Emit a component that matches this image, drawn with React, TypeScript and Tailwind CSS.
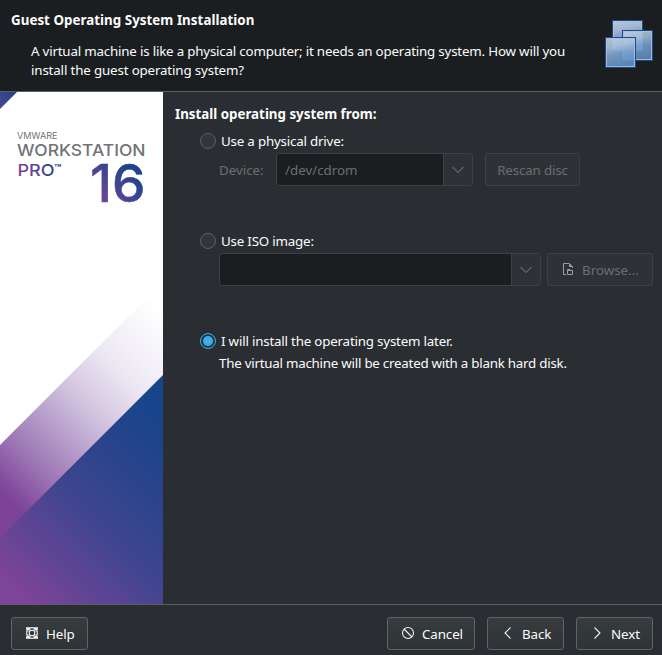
import type { ReactNode } from "react";

function StackIcon() {
  const squares = [
    { x: 7, y: 0, o: 0.95 },
    { x: 17, y: 10, o: 0.88 },
    { x: 0, y: 17, o: 0.92 },
  ];
  return (
    <svg width="48" height="48" viewBox="0 0 48 48" className="mt-5 shrink-0">
      <defs>
        <linearGradient id="glass" x1="0" y1="0" x2="0.25" y2="1">
          <stop offset="0" stopColor="#c3d0e2" />
          <stop offset="0.35" stopColor="#a9c0db" />
          <stop offset="0.6" stopColor="#7ba3cd" />
          <stop offset="1" stopColor="#5f8fc3" />
        </linearGradient>
      </defs>
      {squares.map((s) => (
        <g key={s.x}>
          <rect x={s.x + 0.5} y={s.y + 0.5} width="30" height="30" fill="url(#glass)" fillOpacity={s.o} stroke="#1f4a8a" />
          <rect x={s.x + 1.5} y={s.y + 1.5} width="28" height="28" fill="none" stroke="#a9c2e0" strokeOpacity="0.85" />
        </g>
      ))}
    </svg>
  );
}

function Banner() {
  return (
    <svg width="163" height="512" viewBox="0 0 163 512" className="shrink-0 bg-white">
      <defs>
        <linearGradient id="band" gradientUnits="userSpaceOnUse" x1="0" y1="396" x2="170" y2="226">
          <stop offset="0" stopColor="#7d4399" />
          <stop offset="0.18" stopColor="#9e78b5" />
          <stop offset="0.38" stopColor="#bea9d0" />
          <stop offset="0.52" stopColor="#d6c8e1" />
          <stop offset="0.7" stopColor="#ece8f3" />
          <stop offset="1" stopColor="#ffffff" />
        </linearGradient>
        <linearGradient id="base" gradientUnits="userSpaceOnUse" x1="0" y1="483" x2="162" y2="321">
          <stop offset="0" stopColor="#7e4499" />
          <stop offset="0.45" stopColor="#41458f" />
          <stop offset="0.75" stopColor="#27448c" />
          <stop offset="1" stopColor="#16458b" />
        </linearGradient>
        <linearGradient id="corner" gradientUnits="userSpaceOnUse" x1="0" y1="8" x2="14" y2="0">
          <stop offset="0" stopColor="#41458f" />
          <stop offset="1" stopColor="#1f458c" />
        </linearGradient>
        <linearGradient id="pro" gradientUnits="userSpaceOnUse" x1="18" y1="84" x2="60" y2="74">
          <stop offset="0" stopColor="#7e4499" />
          <stop offset="1" stopColor="#1c458b" />
        </linearGradient>
        <linearGradient id="num" gradientUnits="userSpaceOnUse" x1="98" y1="110" x2="128" y2="76">
          <stop offset="0" stopColor="#75459a" />
          <stop offset="1" stopColor="#1c458b" />
        </linearGradient>
      </defs>
      <path d="M0 0H17L0 17Z" fill="url(#corner)" />
      <path d="M0 353L163 190V284L0 447Z" fill="url(#band)" />
      <path d="M0 446L163 283V512H0Z" fill="url(#base)" />
      <g fontFamily="Inter, 'Liberation Sans', sans-serif" fill="#727376">
        <text x="17" y="47" fontSize="9" textLength="40.5" lengthAdjust="spacingAndGlyphs">VMWARE</text>
        <text x="17" y="64" fontSize="16" fontWeight="500" textLength="128.5" lengthAdjust="spacingAndGlyphs">WORKSTATION</text>
        <text x="17.5" y="84" fontSize="16.5" fontWeight="500" fill="url(#pro)" textLength="37" lengthAdjust="spacingAndGlyphs">PRO</text>
        <text x="54" y="79" fontSize="9" fontWeight="700" fill="#27448c" textLength="7.5" lengthAdjust="spacingAndGlyphs">™</text>
        <text x="90" y="110" fontSize="52.5" fontWeight="500" fill="url(#num)" stroke="url(#num)" strokeWidth="0.5" textLength="55.5" lengthAdjust="spacingAndGlyphs">16</text>
      </g>
    </svg>
  );
}

function Radio({ checked = false }: { checked?: boolean }) {
  return (
    <span
      className={
        checked
          ? "flex size-4 shrink-0 items-center justify-center rounded-full border border-[#3daee9] bg-[#223843]"
          : "flex size-4 shrink-0 rounded-full border border-[#5c6164] bg-[#31363b]"
      }
    >
      {checked && <span className="size-2.5 rounded-full bg-[#3daee9]" />}
    </span>
  );
}

function Option({ label, checked }: { label: string; checked?: boolean }) {
  return (
    <div className="flex h-6 items-center gap-[5px] pl-[37px]">
      <Radio checked={checked} />
      <span className="tracking-[-0.19px]">{label}</span>
    </div>
  );
}

function Combo({ value, className }: { value: string; className: string }) {
  return (
    <div className={`flex h-[33px] overflow-hidden rounded-[3px] border border-[#3d4144] bg-[#1b1e20] text-[#6b6e70] ${className}`}>
      <span className="flex flex-1 items-center pl-2 pt-px">{value}</span>
      <span className="flex w-[29px] items-center justify-center border-l border-[#3d4144] bg-[#2e3236]">
        <svg width="14" height="8" viewBox="0 0 14 8" fill="none" stroke="#5f6366" strokeWidth="1.2">
          <path d="M1.5 1L7 6.5L12.5 1" />
        </svg>
      </span>
    </div>
  );
}

function Button({ icon, label, className }: { icon: ReactNode; label: string; className: string }) {
  return (
    <button
      className={`flex h-[33px] items-center gap-[7px] rounded-[3px] border border-[#5f6466] bg-linear-to-b from-[#373c3f] to-[#2e3336] pl-[13px] ${className}`}
    >
      <svg width="14" height="14" viewBox="0 0 14 14" fill="none" stroke="#eff0f1" strokeWidth="1.1" className="mb-0.5 shrink-0">
        {icon}
      </svg>
      <span className="pt-px tracking-[-0.1px]">{label}</span>
    </button>
  );
}

export default function App() {
  return (
    <div className="flex h-[655px] w-[662px] flex-col overflow-hidden bg-[#2a2e32] font-['Noto_Sans',sans-serif] text-[13.33px] leading-[19px] text-[#fcfcfc]">
      <header className="flex h-[92px] shrink-0 justify-between border-b border-[#5b5f61] bg-[#1b1e20] pl-[11px] pr-[9px]">
        <div className="pt-[11px]">
          <h1 className="font-bold tracking-[0.04px]">Guest Operating System Installation</h1>
          <p className="mt-3 whitespace-nowrap pl-5 tracking-[-0.19px]">
            A virtual machine is like a physical computer; it needs an operating system. How will you
            <br />
            <span className="tracking-[-0.15px]">install the guest operating system?</span>
          </p>
        </div>
        <StackIcon />
      </header>

      <main className="flex h-[512px] shrink-0">
        <Banner />
        <section className="flex-1 pt-[13px]">
          <h2 className="pl-3 font-bold">Install operating system from:</h2>
          <div className="mt-[5px] h-[100px]">
            <Option label="Use a physical drive:" />
            <div className="flex items-center pl-14">
              <span className="w-[57px] pt-px text-[#6b6e70]">Device:</span>
              <Combo value="/dev/cdrom" className="w-[197px]" />
              <button className="ml-3 h-[33px] w-[95px] rounded-[3px] border border-[#3d4144] bg-[#2e3236] pt-px tracking-[-0.15px] text-[#6b6e70]">
                Rescan disc
              </button>
            </div>
          </div>
          <div className="h-[100px]">
            <Option label="Use ISO image:" />
            <div className="flex items-center pl-14">
              <Combo value="" className="w-[322px]" />
              <button className="ml-1.5 flex h-[33px] w-[106px] items-center gap-2 rounded-[3px] border border-[#3d4144] bg-[#2e3236] pl-3.5 text-[#6b6e70]">
                <svg width="12" height="14" viewBox="0 0 12 14" fill="none" stroke="#9b9ea0" className="mb-0.5">
                  <path d="M4 12.5H1.5V1.5H7L10.5 5V6" />
                  <path d="M7 1V5H11Z" fill="#9b9ea0" stroke="none" />
                  <path d="M5.5 12.5V7.5H8L9 8.5H10.5V12.5Z" />
                  <path d="M5.5 8.5H10.5" />
                </svg>
                <span className="pt-px">Browse...</span>
              </button>
            </div>
          </div>
          <Option label="I will install the operating system later." checked />
          <p className="pl-14 pt-px tracking-[-0.235px]">The virtual machine will be created with a blank hard disk.</p>
        </section>
      </main>

      <footer className="flex h-[51px] shrink-0 border-t border-[#5b5f61] pl-[11px] pr-[9px] pt-3">
        <Button
          className="w-[77px]"
          label="Help"
          icon={
            <>
              <circle cx="7" cy="7" r="5.4" />
              <circle cx="7" cy="7" r="2.8" />
              <path d="M5 1.5V5M9 1.5V5M5 9V12.5M9 9V12.5M1.5 5H5M9 5H12.5M1.5 9H5M9 9H12.5" strokeWidth="0.8" />
              <path d="M1 2.5H4.8M9.2 2.5H13M1 11.5H4.8M9.2 11.5H13" strokeWidth="2.4" />
            </>
          }
        />
        <div className="ml-auto flex gap-3">
          <Button
            className="w-[88px]"
            label="Cancel"
            icon={
              <>
                <circle cx="7" cy="7" r="5.5" />
                <path d="M3 3L11 11" />
              </>
            }
          />
          <Button className="w-[77px]" label="Back" icon={<path d="M9.5 1.5L4 7L9.5 12.5" />} />
          <Button className="w-[77px]" label="Next" icon={<path d="M4.5 1.5L10 7L4.5 12.5" />} />
        </div>
      </footer>
    </div>
  );
}
